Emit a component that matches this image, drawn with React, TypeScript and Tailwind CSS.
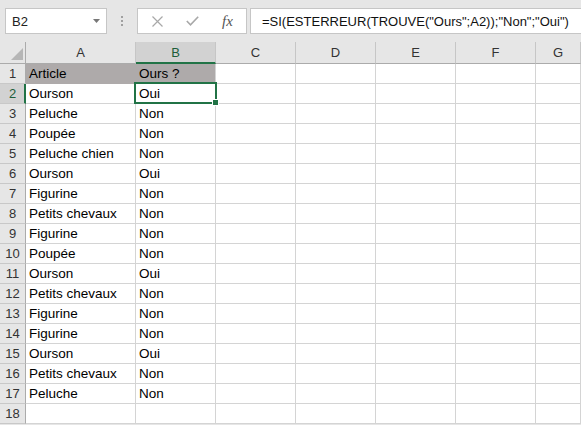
import React from 'react';

const data: [string, string][] = [
  ['Article', 'Ours ?'],
  ['Ourson', 'Oui'],
  ['Peluche', 'Non'],
  ['Poupée', 'Non'],
  ['Peluche chien', 'Non'],
  ['Ourson', 'Oui'],
  ['Figurine', 'Non'],
  ['Petits chevaux', 'Non'],
  ['Figurine', 'Non'],
  ['Poupée', 'Non'],
  ['Ourson', 'Oui'],
  ['Petits chevaux', 'Non'],
  ['Figurine', 'Non'],
  ['Figurine', 'Non'],
  ['Ourson', 'Oui'],
  ['Petits chevaux', 'Non'],
  ['Peluche', 'Non'],
  ['', ''],
];

const colLetters = ['A', 'B', 'C', 'D', 'E', 'F', 'G'];

function FormulaBar() {
  return (
    <div className="h-[42px] flex items-start pt-[8px] bg-[#e6e6e6]">
      <div className="ml-[5px] w-[102px] h-[26px] bg-white border border-[#c6c6c6] flex items-center justify-between pl-[6px] pr-[6px]">
        <span className="text-[13px] leading-none text-[#222]">B2</span>
        <svg width="7" height="4" viewBox="0 0 7 4">
          <path d="M0 0 L7 0 L3.5 4 Z" fill="#777" />
        </svg>
      </div>
      <div className="ml-[14px] w-[2px] h-[26px] flex flex-col items-center justify-center gap-[2px]">
        <div className="w-[2px] h-[2px] bg-[#a0a0a0]" />
        <div className="w-[2px] h-[2px] bg-[#a0a0a0]" />
        <div className="w-[2px] h-[2px] bg-[#a0a0a0]" />
      </div>
      <div className="ml-[14px] w-[110px] h-[26px] bg-white border border-[#c6c6c6] flex items-center">
        <svg className="ml-[14px]" width="11" height="11" viewBox="0 0 11 11">
          <path d="M0.5 0.5 L10.5 10.5 M10.5 0.5 L0.5 10.5" stroke="#a8a8a8" strokeWidth="1.2" fill="none" />
        </svg>
        <svg className="ml-[23px]" width="13" height="10" viewBox="0 0 13 10">
          <path d="M0.8 5 L4.5 8.8 L12.2 0.8" stroke="#a8a8a8" strokeWidth="1.6" fill="none" />
        </svg>
        <span
          className="ml-[23px] text-[15px] leading-none italic text-[#555]"
          style={{ fontFamily: '"Liberation Serif", serif' }}
        >
          fx
        </span>
      </div>
      <div className="ml-[3px] flex-1 h-[26px] bg-white border border-r-0 border-[#c6c6c6] flex items-center pl-[11px] whitespace-nowrap overflow-hidden">
        <span className="text-[13px] leading-none text-[#111]">
          =SI(ESTERREUR(TROUVE("Ours";A2));"Non";"Oui")
        </span>
      </div>
    </div>
  );
}

function Grid() {
  return (
    <div className="relative grid grid-cols-[26px_110px_80px_80px_80px_80px_80px_45px]">
      {/* Header row */}
      <div className="h-[22px] bg-[#e6e6e6] border-r border-b border-[#ababab] flex items-end justify-end pr-[2px] pb-[3px]">
        <svg width="12" height="12" viewBox="0 0 12 12">
          <path d="M12 0 L12 12 L0 12 Z" fill="#b6b6b6" />
        </svg>
      </div>
      {colLetters.map((c) => {
        const sel = c === 'B';
        return (
          <div
            key={c}
            className={
              sel
                ? 'h-[22px] bg-[#d2d2d2] border-r border-r-[#c6c6c6] border-b-2 border-b-[#217346] flex items-center justify-center text-[13px] text-[#1d5e3a]'
                : 'h-[22px] bg-[#e6e6e6] border-r border-r-[#c6c6c6] border-b border-b-[#ababab] flex items-center justify-center text-[13px] text-[#333]'
            }
          >
            <span className="pt-[1px]">{c}</span>
          </div>
        );
      })}
      {data.map((row, i) => {
        const n = i + 1;
        const selRow = n === 2;
        const header = n === 1;
        return (
          <React.Fragment key={n}>
            <div
              className={
                selRow
                  ? 'h-[20px] bg-[#d2d2d2] border-r-2 border-r-[#217346] border-b border-b-[#c8c8c8] flex items-end justify-center pl-[1px] text-[13px] leading-[18px] text-[#1d5e3a]'
                  : 'h-[20px] bg-[#e6e6e6] border-r border-r-[#ababab] border-b border-b-[#c8c8c8] flex items-end justify-center text-[13px] leading-[18px] text-[#333]'
              }
            >
              {n}
            </div>
            <div
              className={
                header
                  ? 'h-[20px] bg-[#aeaaaa] border-r border-b border-[#aeaaaa] pl-[3px] pt-[1px] text-[13.5px] leading-[18px] text-black whitespace-nowrap overflow-hidden'
                  : 'h-[20px] border-r border-b border-[#d4d4d4] pl-[3px] pt-[1px] text-[13.5px] leading-[18px] text-black whitespace-nowrap overflow-hidden bg-white'
              }
            >
              {row[0]}
            </div>
            <div
              className={
                header
                  ? 'h-[20px] bg-[#aeaaaa] border-r border-r-[#d4d4d4] border-b border-b-[#aeaaaa] pl-[3px] pt-[1px] text-[13.5px] leading-[18px] text-black whitespace-nowrap overflow-hidden'
                  : 'h-[20px] border-r border-b border-[#d4d4d4] pl-[3px] pt-[1px] text-[13.5px] leading-[18px] text-black whitespace-nowrap overflow-hidden bg-white'
              }
            >
              {row[1]}
            </div>
            {[0, 1, 2, 3, 4].map((k) => (
              <div key={k} className="h-[20px] border-r border-b border-[#d4d4d4] bg-white" />
            ))}
          </React.Fragment>
        );
      })}
      {/* Selection box on B2 */}
      <div className="absolute left-[134px] top-[40px] w-[83px] h-[22px] border-2 border-[#217346] pointer-events-none" />
      <div className="absolute left-[212px] top-[57px] w-[7px] h-[7px] bg-[#217346] border border-white pointer-events-none" />
    </div>
  );
}

export default function App() {
  return (
    <div
      className="w-[581px] h-[425px] overflow-hidden bg-[#e6e6e6]"
      style={{ fontFamily: '"Liberation Sans", Arial, sans-serif' }}
    >
      <FormulaBar />
      <Grid />
    </div>
  );
}
